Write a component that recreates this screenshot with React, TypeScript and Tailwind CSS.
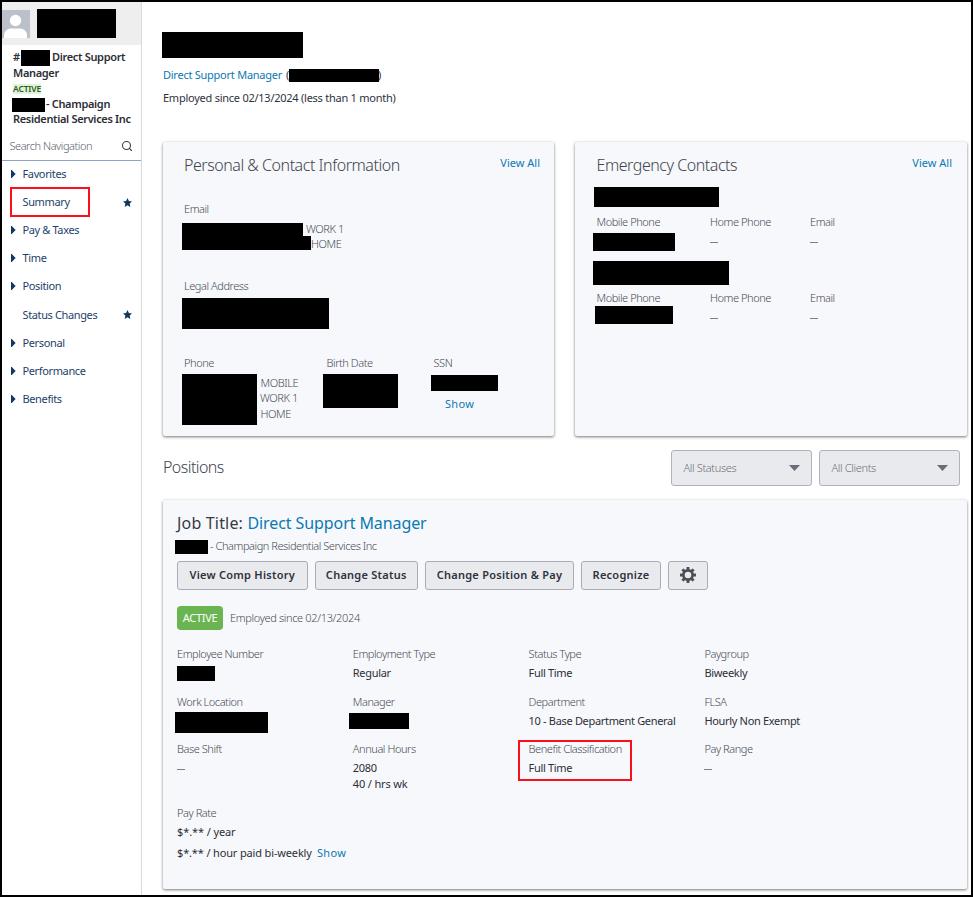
import { ReactNode } from "react";
import { Search } from "lucide-react";

const navItems = [
  { label: "Favorites", group: true },
  { label: "Summary", starred: true, highlighted: true },
  { label: "Pay & Taxes", group: true },
  { label: "Time", group: true },
  { label: "Position", group: true },
  { label: "Status Changes", starred: true },
  { label: "Personal", group: true },
  { label: "Performance", group: true },
  { label: "Benefits", group: true },
];

const Redacted = ({ className }: { className: string }) => (
  <div className={`shrink-0 bg-black ${className}`} />
);

const Label = ({ children }: { children: ReactNode }) => (
  <div className="h-4 leading-4 font-light tracking-[-0.440px] text-[#464b55] whitespace-nowrap">
    {children}
  </div>
);

const Dash = () => <div className="w-2 h-px bg-[#7d8089]" />;

const Star = () => (
  <svg viewBox="0 0 24 24" className="w-[9px] h-[9px]" fill="#123763">
    <path d="M12 0l3.7 8 8.3 1-6.200 5.900 1.700 9.100L12 19.500 4.500 24l1.700-9.100L0 9l8.300-1z" />
  </svg>
);

const Gear = () => (
  <svg viewBox="0 0 24 24" className="w-4 h-4">
    <circle cx="12" cy="12" r="6.900" fill="none" stroke="#4a4e59" strokeWidth="4" />
    {[0, 45, 90, 135, 180, 225, 270, 315].map((angle) => (
      <rect
        key={angle}
        x="9.800"
        y="0"
        width="4.400"
        height="5"
        rx="0.800"
        fill="#4a4e59"
        transform={`rotate(${angle} 12 12)`}
      />
    ))}
  </svg>
);

const Sidebar = () => (
  <aside className="w-[140px] shrink-0 border-r border-[#d9dadd]">
    <div className="flex h-[43px] bg-[#eeeeee] pt-[7px]">
      <svg viewBox="0 0 28 28" className="w-7 h-7 mt-px">
        <rect width="28" height="28" fill="#bcc0cb" />
        <circle cx="13.500" cy="10.500" r="5.700" fill="#fff" />
        <path d="M2 28v-2.500C2 21 6 18.500 9 18.500h9c4 0 7 3 7 7V28z" fill="#fff" />
      </svg>
      <Redacted className="w-[79px] h-[29px] ml-[7px]" />
    </div>

    <div className="h-[80px] pl-[11px] pt-[4px] font-semibold tracking-[-0.330px] text-[#2b2e35] leading-[15.500px] whitespace-nowrap">
      <div className="flex">
        <span className="w-2">#</span>
        <Redacted className="w-[29px] h-4 mt-px mr-[2px]" />
        Direct Support
      </div>
      <div className="-mt-px">Manager</div>
      <div className="h-[15.500px] mt-px flex items-center">
        <span className="bg-[#e1f2da] text-[#2a5c1c] text-[8.500px] leading-[10px] tracking-[-0.150px]">
          ACTIVE
        </span>
      </div>
      <div className="flex h-[15.500px] -mt-[1.500px]">
        <Redacted className="w-[33px] h-[14px] -ml-px mt-[2px] mr-px" />- Champaign
      </div>
      <div>Residential Services Inc</div>
    </div>

    <div className="flex items-center justify-between h-[36px] pl-[7.500px] pr-2 pt-[7px] border-b border-[#8ca6c8]">
      <span className="font-light tracking-[-0.450px] text-[#5a606b]">Search Navigation</span>
      <Search className="w-3 h-3 text-[#3c4048]" strokeWidth={2.2} />
    </div>

    <nav className="-mt-px tracking-[-0.370px] text-[#1d3f69]">
      {navItems.map((item) => (
        <div key={item.label} className="relative flex items-center h-[28.100px] pl-[9px] pr-[9px]">
          {item.highlighted && (
            <div className="absolute left-[8px] top-[-1px] w-[80px] h-[30px] border-2 border-[#fa0f1b]" />
          )}
          <div className="w-[11.500px]">
            {item.group && (
              <svg viewBox="0 0 5 8" className="w-[5px] h-2" fill="#123763">
                <path d="M0 0h.8L4.600 4 .8 8H0z" />
              </svg>
            )}
          </div>
          <span className="flex-1">{item.label}</span>
          {item.starred && <Star />}
        </div>
      ))}
    </nav>
  </aside>
);

const Card = ({ className, children }: { className: string; children: ReactNode }) => (
  <section className={`bg-[#f7f8fb] rounded-[2px] shadow-[0_1px_3px_rgba(0,0,0,0.55)] ${className}`}>
    {children}
  </section>
);

const CardHeader = ({ title }: { title: string }) => (
  <div className="flex justify-between h-[22px] leading-[22px]">
    <h2 className="text-[16px] font-light tracking-[-0.460px] text-[#40444e] whitespace-nowrap">{title}</h2>
    <a className="text-[#0b78b2] -mt-[2px] whitespace-nowrap">View All</a>
  </div>
);

const PersonalCard = () => (
  <Card className="w-[391px] h-[294px] pl-[21px] pr-[14px] pt-3">
    <CardHeader title="Personal & Contact Information" />
    <div className="mt-[25px]">
      <Label>Email</Label>
      <div className="flex mt-[6px] -ml-[2px] h-[13px] items-start">
        <Redacted className="w-[121px] h-[14px]" />
        <div className="-mt-[2px] ml-[3px]"><Label>WORK 1</Label></div>
      </div>
      <div className="flex -ml-[2px] h-[14px]">
        <Redacted className="w-[129px] h-[14px]" />
        <Label>HOME</Label>
      </div>
    </div>
    <div className="mt-7">
      <Label>Legal Address</Label>
      <Redacted className="w-[147px] h-[31px] mt-1 -ml-[2px]" />
    </div>
    <div className="flex mt-[26px]">
      <div className="w-[142.500px]">
        <Label>Phone</Label>
        <div className="flex mt-[3px] -ml-[2px]">
          <Redacted className="w-[75px] h-[51px]" />
          <div className="ml-[3px] pt-[0.500px]">
            <div className="h-[15.500px] pl-[0.500px]"><Label>MOBILE</Label></div>
            <div className="h-[15.500px]"><Label>WORK 1</Label></div>
            <div className="h-[14.500px] pl-[0.500px]"><Label>HOME</Label></div>
          </div>
        </div>
      </div>
      <div className="w-[107px]">
        <Label>Birth Date</Label>
        <Redacted className="w-[75px] h-[34px] mt-[3px] -ml-[3.500px]" />
      </div>
      <div>
        <Label>SSN</Label>
        <Redacted className="w-[67px] h-4 mt-1 -ml-[2.500px]" />
        <a className="block mt-[5px] ml-[11.500px] leading-4 tracking-[0.300px] text-[#0b78b2]">Show</a>
      </div>
    </div>
  </Card>
);

const ContactFields = ({ phone }: { phone: ReactNode }) => (
  <div className="flex">
    <div className="w-[113.500px]">
      <Label>Mobile Phone</Label>
      {phone}
    </div>
    <div className="w-[100px]">
      <Label>Home Phone</Label>
      <div className="mt-[12px]"><Dash /></div>
    </div>
    <div>
      <Label>Email</Label>
      <div className="mt-[12px]"><Dash /></div>
    </div>
  </div>
);

const EmergencyCard = () => (
  <Card className="w-[392px] h-[294px] pl-[21.500px] pr-[15px] pt-3">
    <CardHeader title="Emergency Contacts" />
    <Redacted className="w-[125px] h-5 mt-[11px] -ml-[2.500px]" />
    <div className="h-[54px] pt-[7px]">
      <ContactFields phone={<Redacted className="w-[82px] h-[18px] mt-[3px] -ml-[3.500px]" />} />
    </div>
    <Redacted className="w-[136px] h-6 -ml-[3.500px]" />
    <div className="pt-[5px]">
      <ContactFields phone={<Redacted className="w-[78px] h-[18px] -ml-[2px]" />} />
    </div>
  </Card>
);

const SelectBox = ({ label }: { label: string }) => (
  <div className="flex items-center justify-between w-[141px] h-9 pl-3 pr-[11px] rounded-[3px] border border-[#b0b3bb] bg-[#e9eaed] font-light tracking-[-0.350px] text-[#6c707a]">
    {label}
    <svg viewBox="0 0 11 6" className="w-[11px] h-[6px]" fill="#6a6e78">
      <path d="M0 0h11L5.500 6z" />
    </svg>
  </div>
);

const Button = ({ className, children }: { className: string; children: ReactNode }) => (
  <button
    className={`flex items-center justify-center h-[29px] pb-px rounded-[3px] border border-[#a9acb5] bg-[#e9eaed] font-semibold tracking-[0.250px] text-[#2e323c] whitespace-nowrap ${className}`}
  >
    {children}
  </button>
);

const Field = ({ label, children }: { label: string; children: ReactNode }) => (
  <div className="w-[175.800px] shrink-0">
    <Label>{label}</Label>
    <div className="relative pt-[3px] leading-4 tracking-[-0.320px] text-[#2b2f38] whitespace-nowrap">
      {children}
    </div>
  </div>
);

const EmptyValue = () => (
  <div className="pt-[9px]">
    <Dash />
  </div>
);

const PositionCard = () => (
  <Card className="w-[804px] h-[389px] pl-[14px] pt-[11px]">
    <h3 className="text-[16px] leading-6 tracking-[0.180px] text-[#363a44]">
      Job Title: <a className="tracking-[-0.090px] text-[#0b78b2]">Direct Support Manager</a>
    </h3>
    <div className="flex mt-[5px] h-[14px] -ml-[2px]">
      <Redacted className="w-[33px] h-[14px] mr-[2px]" />
      <div className="-mt-[2px]"><Label>- Champaign Residential Services Inc</Label></div>
    </div>
    <div className="flex mt-[7px] gap-[7px]">
      <Button className="w-[130.500px]">View Comp History</Button>
      <Button className="w-[103.500px]">Change Status</Button>
      <Button className="w-[149px]">Change Position &amp; Pay</Button>
      <Button className="w-[80px]">Recognize</Button>
      <Button className="w-[40px]">
        <Gear />
      </Button>
    </div>
    <div className="flex items-center mt-4 h-6 gap-[7px]">
      <span className="flex items-center justify-center w-[46px] h-6 rounded-[4px] bg-[#6ab552] tracking-[-0.300px] text-white">
        ACTIVE
      </span>
      <span className="font-light tracking-[-0.340px] text-[#464b55]">Employed since 02/13/2024</span>
    </div>

    <div className="flex mt-4 h-[47.500px]">
      <Field label="Employee Number">
        <Redacted className="w-[38px] h-[15px] mt-[1px]" />
      </Field>
      <Field label="Employment Type">Regular</Field>
      <Field label="Status Type">Full Time</Field>
      <Field label="Paygroup">Biweekly</Field>
    </div>
    <div className="flex h-[47.500px]">
      <Field label="Work Location">
        <Redacted className="w-[93px] h-[21px] -ml-[2px] -mt-px" />
      </Field>
      <Field label="Manager">
        <Redacted className="w-[60px] h-4 -ml-1" />
      </Field>
      <Field label="Department">10 - Base Department General</Field>
      <Field label="FLSA">Hourly Non Exempt</Field>
    </div>
    <div className="flex h-[64px]">
      <Field label="Base Shift">
        <EmptyValue />
      </Field>
      <Field label="Annual Hours">
        2080
        <br />
        <span className="tracking-[-0.150px]">40 / hrs wk</span>
      </Field>
      <Field label="Benefit Classification">
        Full Time
        <div className="absolute left-[-11px] top-[-17px] w-[114px] h-[41px] border-2 border-[#fa0f1b]" />
      </Field>
      <Field label="Pay Range">
        <EmptyValue />
      </Field>
    </div>
    <Field label="Pay Rate">
      <div className="tracking-[-0.100px]">$*.** / year</div>
      <div className="mt-[5px] tracking-[-0.150px]">
        $*.** / hour paid bi-weekly <a className="ml-[2.500px] tracking-[0.300px] text-[#0b78b2]">Show</a>
      </div>
    </Field>
  </Card>
);

const App = () => (
  <div className="flex w-[973px] h-[897px] overflow-hidden border-2 border-black bg-white font-['Noto_Sans',sans-serif] text-[11px] leading-4">
    <Sidebar />
    <main className="flex-1 pl-[21px]">
      <Redacted className="w-[141px] h-[26px] mt-[30px] -ml-px" />
      <div className="flex items-center mt-[9px] h-4 text-[#2e323c] tracking-[-0.250px] whitespace-nowrap">
        <a className="text-[#0b78b2] mr-1">Direct Support Manager</a>(
        <Redacted className="w-[90px] h-[13px] -mr-px" />)
      </div>
      <div className="mt-[7px] leading-4 tracking-[-0.250px] text-[#2e323c]">
        Employed since 02/13/2024 (less than 1 month)
      </div>
      <div className="flex mt-9 gap-[21px]">
        <PersonalCard />
        <EmergencyCard />
      </div>
      <div className="flex justify-between mt-[14px] h-9 pr-[11.500px]">
        <h2 className="text-[16px] leading-[34px] font-light tracking-[-0.550px] text-[#40444e]">Positions</h2>
        <div className="flex gap-[7px]">
          <SelectBox label="All Statuses" />
          <SelectBox label="All Clients" />
        </div>
      </div>
      <div className="mt-[14px]">
        <PositionCard />
      </div>
    </main>
  </div>
);

export default App;
